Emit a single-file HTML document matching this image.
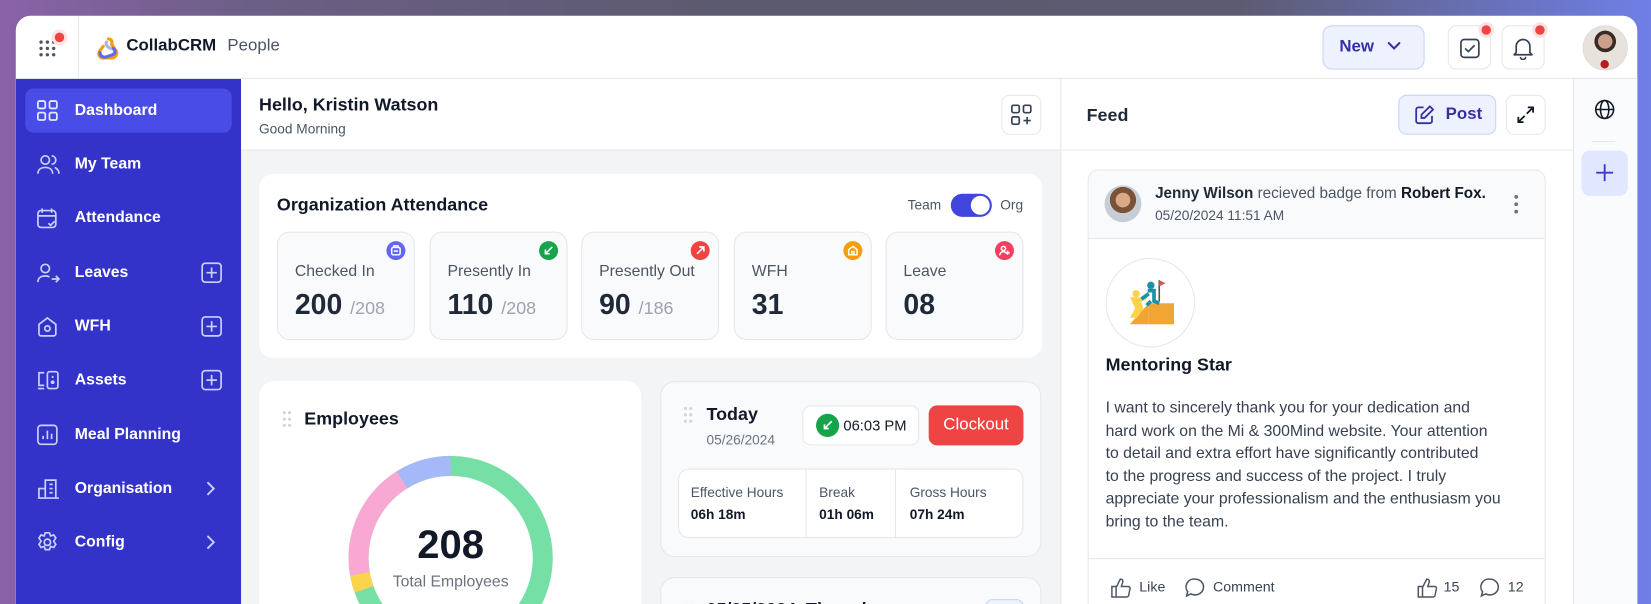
<!DOCTYPE html>
<html><head><meta charset="utf-8">
<style>
*{box-sizing:border-box;margin:0;padding:0}
html,body{width:1651px;height:604px;overflow:hidden}
body{background:linear-gradient(90deg,#8a62a8 0%,#6c5f86 15%,#5b5a6e 45%,#5d5b72 75%,#6f7fe6 100%);font-family:"Liberation Sans",sans-serif;color:#111827;position:relative}
#w{position:absolute;left:0;top:0;width:1568px;height:573.6px;overflow:hidden;transform:scale(1.05293);transform-origin:0 0}
.a{position:absolute}
#frame{left:15px;top:15px;width:1540px;height:600px;background:#fff;border-radius:14px 14px 0 0;overflow:hidden}
.t{position:absolute;white-space:nowrap}
.dot{position:absolute;width:9px;height:9px;border-radius:50%;background:#ef4444;box-shadow:0 0 0 3px #fde2e2}
.btn{position:absolute;border:1px solid #e5e7eb;border-radius:8px;background:#fff}
.nav{position:absolute;left:24px;width:196px;height:42px;color:#fff;font-size:15px;font-weight:bold}
.nav svg{position:absolute;left:11px;top:11px}
.nav span{position:absolute;left:47px;top:12px}
.nav .pl{position:absolute;left:167px;top:12px}
.stat{position:absolute;top:220px;width:131px;height:103px;background:#f9fafb;border:1px solid #e5e7eb;border-radius:12px}
.stat .l{position:absolute;left:16px;top:28px;font-size:15px;color:#4b5563}
.stat .n{position:absolute;left:16px;top:53px;font-size:27px;font-weight:bold;color:#1f2937}
.stat .n small{font-size:17px;color:#9ca3af;font-weight:normal}
.stat .ic{position:absolute;right:8px;top:8px;width:18px;height:18px;border-radius:50%}
.stat .ic svg{position:absolute;left:3px;top:3px}
</style></head><body><div id="w">
<div id="frame" class="a">
 <div class="a" style="left:0;top:0;width:1540px;height:60px;border-bottom:1px solid #e5e7eb"></div>
 <div class="a" style="left:59px;top:0;width:1px;height:60px;background:#e5e7eb"></div>
 <svg class="a" style="left:21px;top:22px" width="18" height="18"><g fill="#4b5563"><circle cx="3" cy="3" r="1.6"/><circle cx="9" cy="3" r="1.6"/><circle cx="15" cy="3" r="1.6"/><circle cx="3" cy="9" r="1.6"/><circle cx="9" cy="9" r="1.6"/><circle cx="15" cy="9" r="1.6"/><circle cx="3" cy="15" r="1.6"/><circle cx="9" cy="15" r="1.6"/><circle cx="15" cy="15" r="1.6"/></g></svg>
 <div class="dot" style="left:37px;top:16px"></div>
 <svg class="a" style="left:76px;top:19px" width="24" height="24" viewBox="0 0 24 24"><path d="M12 3c3 0 4 3 3 5l4 6c2 3 0 7-4 7H7c-4 0-5-4-3-7l3-4" fill="none" stroke="#f59e0b" stroke-width="3" stroke-linecap="round"/><path d="M4 16c0 3 3 5 6 4l6-2c3-1 3-5 0-6" fill="none" stroke="#6366f1" stroke-width="3" stroke-linecap="round"/><path d="M10 6c-1 3 2 5 4 6" fill="none" stroke="#a5b4fc" stroke-width="3" stroke-linecap="round"/></svg>
 <div class="t" style="left:105px;top:20px;font-size:16px;font-weight:bold;color:#111827">CollabCRM</div>
 <div class="t" style="left:201px;top:20px;font-size:16px;color:#4b5563">People</div>
 <div class="a" style="left:1241px;top:9px;width:97px;height:42px;background:#eef2ff;border:1px solid #c7d2fe;border-radius:9px"></div>
 <div class="t" style="left:1257px;top:21px;font-size:16px;font-weight:bold;color:#3730a3">New</div>
 <svg class="a" style="left:1302px;top:24px" width="14" height="10"><path d="M2 2l5 5 5-5" fill="none" stroke="#3730a3" stroke-width="2" stroke-linecap="round"/></svg>
 <div class="btn" style="left:1360px;top:9px;width:41px;height:42px"></div>
 <svg class="a" style="left:1371px;top:21px" width="20" height="20"><rect x="1.5" y="1.5" width="17" height="17" rx="3" fill="none" stroke="#374151" stroke-width="1.6"/><path d="M5.5 10l3 3 6-6" fill="none" stroke="#374151" stroke-width="1.6"/></svg>
 <div class="dot" style="left:1392px;top:9px"></div>
 <div class="btn" style="left:1411px;top:9px;width:41px;height:42px"></div>
 <svg class="a" style="left:1421px;top:20px" width="21" height="22"><path d="M4 15V9a6.5 6.5 0 0113 0v6l2 2H2z M8 19a2.5 2.5 0 005 0" fill="none" stroke="#374151" stroke-width="1.6" stroke-linejoin="round"/></svg>
 <div class="dot" style="left:1443px;top:9px"></div>
 <div class="a" style="left:1488px;top:9px;width:43px;height:43px;border-radius:50%;background:radial-gradient(circle at 50% 35%,#caa08a 0 20%,#3a2a25 21% 30%,#e8e2dc 31% 100%);border:1px solid #ddd"></div>
 <div class="a" style="left:1505px;top:42px;width:8px;height:8px;border-radius:50%;background:#b91c1c"></div>
 <div class="a" style="left:0;top:60px;width:214px;height:600px;background:#3333c9"></div>
</div>
<div class="nav" style="top:84px;background:#4a4ce8;border-radius:8px">
 <svg width="20" height="20" fill="none" stroke="#e0e7ff" stroke-width="1.7"><rect x="1" y="1" width="7" height="7" rx="1.5"/><rect x="12" y="1" width="7" height="7" rx="1.5"/><rect x="1" y="12" width="7" height="7" rx="1.5"/><rect x="12" y="12" width="7" height="7" rx="1.5"/></svg><span>Dashboard</span></div>
<div class="nav" style="top:135px"><svg width="22" height="20" fill="none" stroke="#c7d2fe" stroke-width="1.6"><circle cx="8" cy="6" r="4"/><path d="M1 19c0-4 3-6 7-6s7 2 7 6M14 2a4 4 0 010 8M17 13c2 1 4 3 4 6"/></svg><span>My Team</span></div>
<div class="nav" style="top:186px"><svg width="20" height="20" fill="none" stroke="#c7d2fe" stroke-width="1.6"><rect x="1" y="3" width="17" height="16" rx="3"/><path d="M5 1v4M14 1v4M1 8h17M11 15l2 2 4-4"/></svg><span>Attendance</span></div>
<div class="nav" style="top:238px"><svg width="22" height="20" fill="none" stroke="#c7d2fe" stroke-width="1.6"><circle cx="8" cy="6" r="4"/><path d="M1 19c0-4 3-6 7-6 2 0 3 .5 4 1M14 16h7M18 13l3 3-3 3"/></svg><span>Leaves</span><svg class="pl" style="left:167px;top:11px" width="20" height="20" fill="none" stroke="#c7d2fe" stroke-width="1.6"><rect x="1" y="1" width="18" height="18" rx="3"/><path d="M10 5v10M5 10h10"/></svg></div>
<div class="nav" style="top:289px"><svg width="20" height="20" fill="none" stroke="#c7d2fe" stroke-width="1.6"><path d="M2 8l8-6 8 6v9a2 2 0 01-2 2H4a2 2 0 01-2-2z"/><circle cx="10" cy="12" r="2.5"/></svg><span>WFH</span><svg class="pl" style="left:167px;top:11px" width="20" height="20" fill="none" stroke="#c7d2fe" stroke-width="1.6"><rect x="1" y="1" width="18" height="18" rx="3"/><path d="M10 5v10M5 10h10"/></svg></div>
<div class="nav" style="top:340px"><svg width="22" height="20" fill="none" stroke="#c7d2fe" stroke-width="1.6"><path d="M7 3H2v12h5M1 18h6"/><rect x="10" y="2" width="10" height="16" rx="2"/><circle cx="15" cy="12" r="1" fill="#c7d2fe"/><path d="M15 6v2"/></svg><span>Assets</span><svg class="pl" style="left:167px;top:11px" width="20" height="20" fill="none" stroke="#c7d2fe" stroke-width="1.6"><rect x="1" y="1" width="18" height="18" rx="3"/><path d="M10 5v10M5 10h10"/></svg></div>
<div class="nav" style="top:392px"><svg width="20" height="20" fill="none" stroke="#c7d2fe" stroke-width="1.6"><rect x="1" y="1" width="18" height="18" rx="3"/><path d="M6 14v-3M10 14V6M14 14v-5"/></svg><span>Meal Planning</span></div>
<div class="nav" style="top:443px"><svg width="22" height="20" fill="none" stroke="#c7d2fe" stroke-width="1.6"><path d="M1 19h20M2 19v-9h6M8 19V2h10v17M12 6h3M12 10h3M12 14h3"/></svg><span>Organisation</span><svg class="pl" style="left:170px;top:14px" width="12" height="14" fill="none" stroke="#c7d2fe" stroke-width="1.8"><path d="M3 1l6 6-6 6"/></svg></div>
<div class="nav" style="top:494px"><svg width="20" height="20" fill="none" stroke="#c7d2fe" stroke-width="1.6"><path d="M8 1h4l1 3 3-1 2 3-2 3 2 3-2 3-3-1-1 3H8l-1-3-3 1-2-3 2-3-2-3 2-3 3 1z"/><circle cx="10" cy="10" r="3"/></svg><span>Config</span><svg class="pl" style="left:170px;top:14px" width="12" height="14" fill="none" stroke="#c7d2fe" stroke-width="1.8"><path d="M3 1l6 6-6 6"/></svg></div>

<div class="a" style="left:229px;top:75px;width:778px;height:520px;background:#f3f4f6"></div>
<div class="a" style="left:229px;top:75px;width:778px;height:68px;background:#fff;border-bottom:1px solid #e5e7eb"></div>
<div class="t" style="left:246px;top:90px;font-size:17px;font-weight:bold;color:#111827">Hello, Kristin Watson</div>
<div class="t" style="left:246px;top:115px;font-size:13px;color:#4b5563">Good Morning</div>
<div class="btn" style="left:951px;top:90px;width:38px;height:38px"></div>
<svg class="a" style="left:960px;top:99px" width="20" height="20" fill="none" stroke="#374151" stroke-width="1.6"><rect x="1" y="1" width="7" height="7" rx="1.5"/><rect x="12" y="1" width="7" height="7" rx="1.5"/><rect x="1" y="12" width="7" height="7" rx="1.5"/><path d="M15.5 12v7M12 15.5h7"/></svg>

<div class="a" style="left:246px;top:165px;width:744px;height:175px;background:#fff;border-radius:14px"></div>
<div class="t" style="left:263px;top:185px;font-size:17px;font-weight:bold;color:#111827">Organization Attendance</div>
<div class="t" style="left:862px;top:187px;font-size:13px;color:#4b5563">Team</div>
<div class="a" style="left:903px;top:184px;width:39px;height:22px;border-radius:11px;background:#4046dd"></div>
<div class="a" style="left:922px;top:186px;width:18px;height:18px;border-radius:50%;background:#fff"></div>
<div class="t" style="left:950px;top:187px;font-size:13px;color:#4b5563">Org</div>
<div class="stat" style="left:263px"><div class="ic" style="background:#6366f1"><svg width="12" height="12" fill="none" stroke="#fff" stroke-width="1.4"><rect x="2" y="3" width="8" height="7" rx="1.5"/><path d="M4 3V1.5h4V3M4 6.5h4"/></svg></div><div class="l">Checked In</div><div class="n">200 <small>/208</small></div></div>
<div class="stat" style="left:408px"><div class="ic" style="background:#16a34a"><svg width="12" height="12" fill="none" stroke="#fff" stroke-width="1.5"><path d="M9.5 2.5L3 9M3 5v4h4"/></svg></div><div class="l">Presently In</div><div class="n">110 <small>/208</small></div></div>
<div class="stat" style="left:552px"><div class="ic" style="background:#ef4444"><svg width="12" height="12" fill="none" stroke="#fff" stroke-width="1.5"><path d="M3 9l6.5-6.5M5 2.5h4.5V7"/></svg></div><div class="l">Presently Out</div><div class="n">90 <small>/186</small></div></div>
<div class="stat" style="left:697px"><div class="ic" style="background:#f59e0b"><svg width="12" height="12" fill="none" stroke="#fff" stroke-width="1.4"><path d="M2 5l4-3 4 3v5H2zM5 10V7h2v3"/></svg></div><div class="l">WFH</div><div class="n">31</div></div>
<div class="stat" style="left:841px"><div class="ic" style="background:#f43f5e"><svg width="12" height="12" fill="none" stroke="#fff" stroke-width="1.4"><circle cx="5" cy="4" r="2"/><path d="M1.5 10.5c0-2 1.5-3.5 3.5-3.5s2.5 1 3 2M9 6v4M7 8h4"/></svg></div><div class="l">Leave</div><div class="n">08</div></div>

<div class="a" style="left:246px;top:362px;width:363px;height:340px;background:#fff;border-radius:14px"></div>
<svg class="a" style="left:268px;top:390px" width="10" height="16" fill="#d1d5db"><circle cx="2" cy="2" r="1.5"/><circle cx="7" cy="2" r="1.5"/><circle cx="2" cy="8" r="1.5"/><circle cx="7" cy="8" r="1.5"/><circle cx="2" cy="14" r="1.5"/><circle cx="7" cy="14" r="1.5"/></svg>
<div class="t" style="left:289px;top:388px;font-size:17px;font-weight:bold;color:#111827">Employees</div>
<svg class="a" style="left:320px;top:422px" width="216" height="216"><g transform="rotate(-90 108 108)" fill="none" stroke-width="19"><circle cx="108" cy="108" r="87.5" stroke="#76dfa6"/><circle cx="108" cy="108" r="87.5" stroke="#fcd34d" stroke-dasharray="15.3 600" stroke-dashoffset="-381.8"/><circle cx="108" cy="108" r="87.5" stroke="#f9a8d4" stroke-dasharray="103.8 600" stroke-dashoffset="-397.1"/><circle cx="108" cy="108" r="87.5" stroke="#a5b8f8" stroke-dasharray="48.9 600" stroke-dashoffset="-500.9"/></g></svg>
<div class="t" style="left:378px;top:497px;width:100px;text-align:center;font-size:38px;font-weight:bold;color:#111827">208</div>
<div class="t" style="left:358px;top:544px;width:140px;text-align:center;font-size:15px;color:#6b7280">Total Employees</div>

<div class="a" style="left:627px;top:362px;width:362px;height:167px;background:#f9fafb;border:1px solid #e5e7eb;border-radius:14px"></div>
<svg class="a" style="left:649px;top:386px" width="10" height="16" fill="#d1d5db"><circle cx="2" cy="2" r="1.5"/><circle cx="7" cy="2" r="1.5"/><circle cx="2" cy="8" r="1.5"/><circle cx="7" cy="8" r="1.5"/><circle cx="2" cy="14" r="1.5"/><circle cx="7" cy="14" r="1.5"/></svg>
<div class="t" style="left:671px;top:384px;font-size:17px;font-weight:bold;color:#111827">Today</div>
<div class="t" style="left:671px;top:410px;font-size:13px;color:#6b7280">05/26/2024</div>
<div class="a" style="left:762px;top:385px;width:111px;height:38px;background:#fff;border:1px solid #e5e7eb;border-radius:8px"></div>
<div class="a" style="left:775px;top:393px;width:22px;height:22px;border-radius:50%;background:#16a34a"></div>
<svg class="a" style="left:780px;top:398px" width="12" height="12" fill="none" stroke="#fff" stroke-width="1.6"><path d="M10 2L3 9M3 5v4h4"/></svg>
<div class="t" style="left:801px;top:396px;font-size:14px;color:#111827">06:03 PM</div>
<div class="a" style="left:882px;top:385px;width:90px;height:38px;background:#ef4444;border-radius:8px"></div>
<div class="t" style="left:882px;top:395px;width:90px;text-align:center;font-size:16px;color:#fff">Clockout</div>
<div class="a" style="left:644px;top:445px;width:328px;height:66px;background:#fff;border:1px solid #e5e7eb;border-radius:10px"></div>
<div class="a" style="left:765px;top:446px;width:1px;height:64px;background:#e5e7eb"></div>
<div class="a" style="left:850px;top:446px;width:1px;height:64px;background:#e5e7eb"></div>
<div class="t" style="left:656px;top:460px;font-size:13px;color:#4b5563">Effective Hours</div>
<div class="t" style="left:656px;top:481px;font-size:13px;font-weight:bold;color:#111827">06h 18m</div>
<div class="t" style="left:778px;top:460px;font-size:13px;color:#4b5563">Break</div>
<div class="t" style="left:778px;top:481px;font-size:13px;font-weight:bold;color:#111827">01h 06m</div>
<div class="t" style="left:864px;top:460px;font-size:13px;color:#4b5563">Gross Hours</div>
<div class="t" style="left:864px;top:481px;font-size:13px;font-weight:bold;color:#111827">07h 24m</div>
<div class="a" style="left:627px;top:548px;width:362px;height:140px;background:#f9fafb;border:1px solid #e5e7eb;border-radius:14px;overflow:hidden">
 <svg class="a" style="left:22px;top:24px" width="10" height="16" fill="#d1d5db"><circle cx="2" cy="2" r="1.5"/><circle cx="7" cy="2" r="1.5"/><circle cx="2" cy="8" r="1.5"/><circle cx="7" cy="8" r="1.5"/></svg>
 <div class="t" style="left:43px;top:20px;font-size:17px;font-weight:bold;color:#111827">05/25/2024, Thursday</div>
 <div class="a" style="left:307px;top:20px;width:38px;height:38px;border:1px solid #c7d2fe;border-radius:8px;background:#eef2ff"></div>
</div>

<div class="a" style="left:1007px;top:75px;width:487px;height:520px;background:#fff;border-left:1px solid #e5e7eb"></div>
<div class="a" style="left:1007px;top:142px;width:487px;height:1px;background:#e5e7eb"></div>
<div class="t" style="left:1032px;top:100px;font-size:17px;font-weight:bold;color:#1f2937">Feed</div>
<div class="a" style="left:1328px;top:90px;width:93px;height:38px;background:#eef2ff;border:1px solid #c7d2fe;border-radius:8px"></div>
<svg class="a" style="left:1343px;top:99px" width="20" height="20" fill="none" stroke="#3730a3" stroke-width="1.7"><path d="M9 3H4a2 2 0 00-2 2v11a2 2 0 002 2h11a2 2 0 002-2v-5M15 2l3 3-8 8H7v-3z"/></svg>
<div class="t" style="left:1373px;top:100px;font-size:16px;font-weight:bold;color:#3730a3">Post</div>
<div class="btn" style="left:1430px;top:90px;width:38px;height:38px"></div>
<svg class="a" style="left:1440px;top:100px" width="18" height="18" fill="none" stroke="#111827" stroke-width="1.7"><path d="M11 2h5v5M16 2l-6 6M7 16H2v-5M2 16l6-6"/></svg>
<div class="a" style="left:1033px;top:161px;width:435px;height:540px;border:1px solid #e5e7eb;border-radius:10px;overflow:hidden">
 <div class="a" style="left:0;top:0;width:435px;height:65px;background:#f9fafb;border-bottom:1px solid #e5e7eb"></div>
</div>
<div class="a" style="left:1049px;top:176px;width:35px;height:35px;border-radius:50%;background:radial-gradient(circle at 50% 40%,#d9a98a 0 25%,#7a5236 26% 45%,#c7cdd6 46%)"></div>
<div class="t" style="left:1097px;top:176px;font-size:14.5px;color:#4b5563"><b style="color:#1f2937">Jenny Wilson</b> recieved badge from <b style="color:#111827">Robert Fox.</b></div>
<div class="t" style="left:1097px;top:197px;font-size:13px;color:#4b5563">05/20/2024 11:51 AM</div>
<svg class="a" style="left:1436px;top:184px" width="8" height="20" fill="#6b7280"><circle cx="4" cy="3" r="1.8"/><circle cx="4" cy="10" r="1.8"/><circle cx="4" cy="17" r="1.8"/></svg>
<div class="a" style="left:1050px;top:245px;width:85px;height:85px;border-radius:50%;border:1px solid #e5e7eb"></div>
<svg class="a" style="left:1067px;top:262px" width="52" height="48"><rect x="24" y="26" width="24" height="20" fill="#f0a535"/><path d="M6 46l18-20v20z" fill="#f0a535"/><circle cx="12" cy="17" r="3.5" fill="#fcd34d"/><path d="M9 22l5 0 3 9-5 7h-3l4-7z M14 24l8-4" stroke="#fcd34d" stroke-width="3.5" fill="#fcd34d"/><circle cx="26" cy="9" r="3.5" fill="#1a91a8"/><path d="M23 14h6v10l5 2M24 17l-7 5M26 24l-4 4" stroke="#1a91a8" stroke-width="3.5" fill="none"/><path d="M34 4v20" stroke="#555" stroke-width="1.5"/><path d="M34 4l6 3-6 3z" fill="#e25555"/></svg>
<div class="t" style="left:1050px;top:337px;font-size:17px;font-weight:bold;color:#111827">Mentoring Star</div>
<div class="a" style="left:1050px;top:377px;width:420px;font-size:15px;line-height:21.5px;color:#374151">I want to sincerely thank you for your dedication and<br>hard work on the Mi &amp; 300Mind website. Your attention<br>to detail and extra effort have significantly contributed<br>to the progress and success of the project. I truly<br>appreciate your professionalism and the enthusiasm you<br>bring to the team.</div>
<div class="a" style="left:1034px;top:530px;width:433px;height:1px;background:#e5e7eb"></div>
<svg class="a" style="left:1054px;top:547px" width="22" height="22" fill="none" stroke="#4b5563" stroke-width="1.4"><path d="M2 10h4v10H2zM6 11l4-8c2 0 3 1 2 4l-1 3h7a2 2 0 011 3l-1 5a2 2 0 01-2 2H6"/></svg>
<div class="t" style="left:1082px;top:550px;font-size:13.5px;color:#374151">Like</div>
<svg class="a" style="left:1125px;top:548px" width="20" height="20" fill="none" stroke="#4b5563" stroke-width="1.5"><path d="M10 2a8 7.5 0 110 15c-1.5 0-3-.4-4-1l-4 2 1-4a7.5 7.5 0 017-12z"/></svg>
<div class="t" style="left:1152px;top:550px;font-size:13.5px;color:#374151">Comment</div>
<svg class="a" style="left:1345px;top:547px" width="22" height="22" fill="none" stroke="#4b5563" stroke-width="1.4"><path d="M2 10h4v10H2zM6 11l4-8c2 0 3 1 2 4l-1 3h7a2 2 0 011 3l-1 5a2 2 0 01-2 2H6"/></svg>
<div class="t" style="left:1371px;top:550px;font-size:13.5px;color:#374151">15</div>
<svg class="a" style="left:1405px;top:548px" width="20" height="20" fill="none" stroke="#4b5563" stroke-width="1.5"><path d="M10 2a8 7.5 0 110 15c-1.5 0-3-.4-4-1l-4 2 1-4a7.5 7.5 0 017-12z"/></svg>
<div class="t" style="left:1432px;top:550px;font-size:13.5px;color:#374151">12</div>

<div class="a" style="left:1494px;top:75px;width:61px;height:520px;background:#fafbfc;border-left:1px solid #e5e7eb"></div>
<svg class="a" style="left:1514px;top:94px" width="20" height="20" fill="none" stroke="#111827" stroke-width="1.5"><circle cx="10" cy="10" r="8.5"/><ellipse cx="10" cy="10" rx="4" ry="8.5"/><path d="M1.5 10h17"/></svg>
<div class="a" style="left:1512px;top:134px;width:22px;height:1px;background:#e5e7eb"></div>
<div class="a" style="left:1502px;top:143px;width:44px;height:43px;background:#e0e7ff;border-radius:8px"></div>
<svg class="a" style="left:1515px;top:155px" width="18" height="18" stroke="#4338ca" stroke-width="1.8"><path d="M9 1v16M1 9h16"/></svg>
</div></body></html>
